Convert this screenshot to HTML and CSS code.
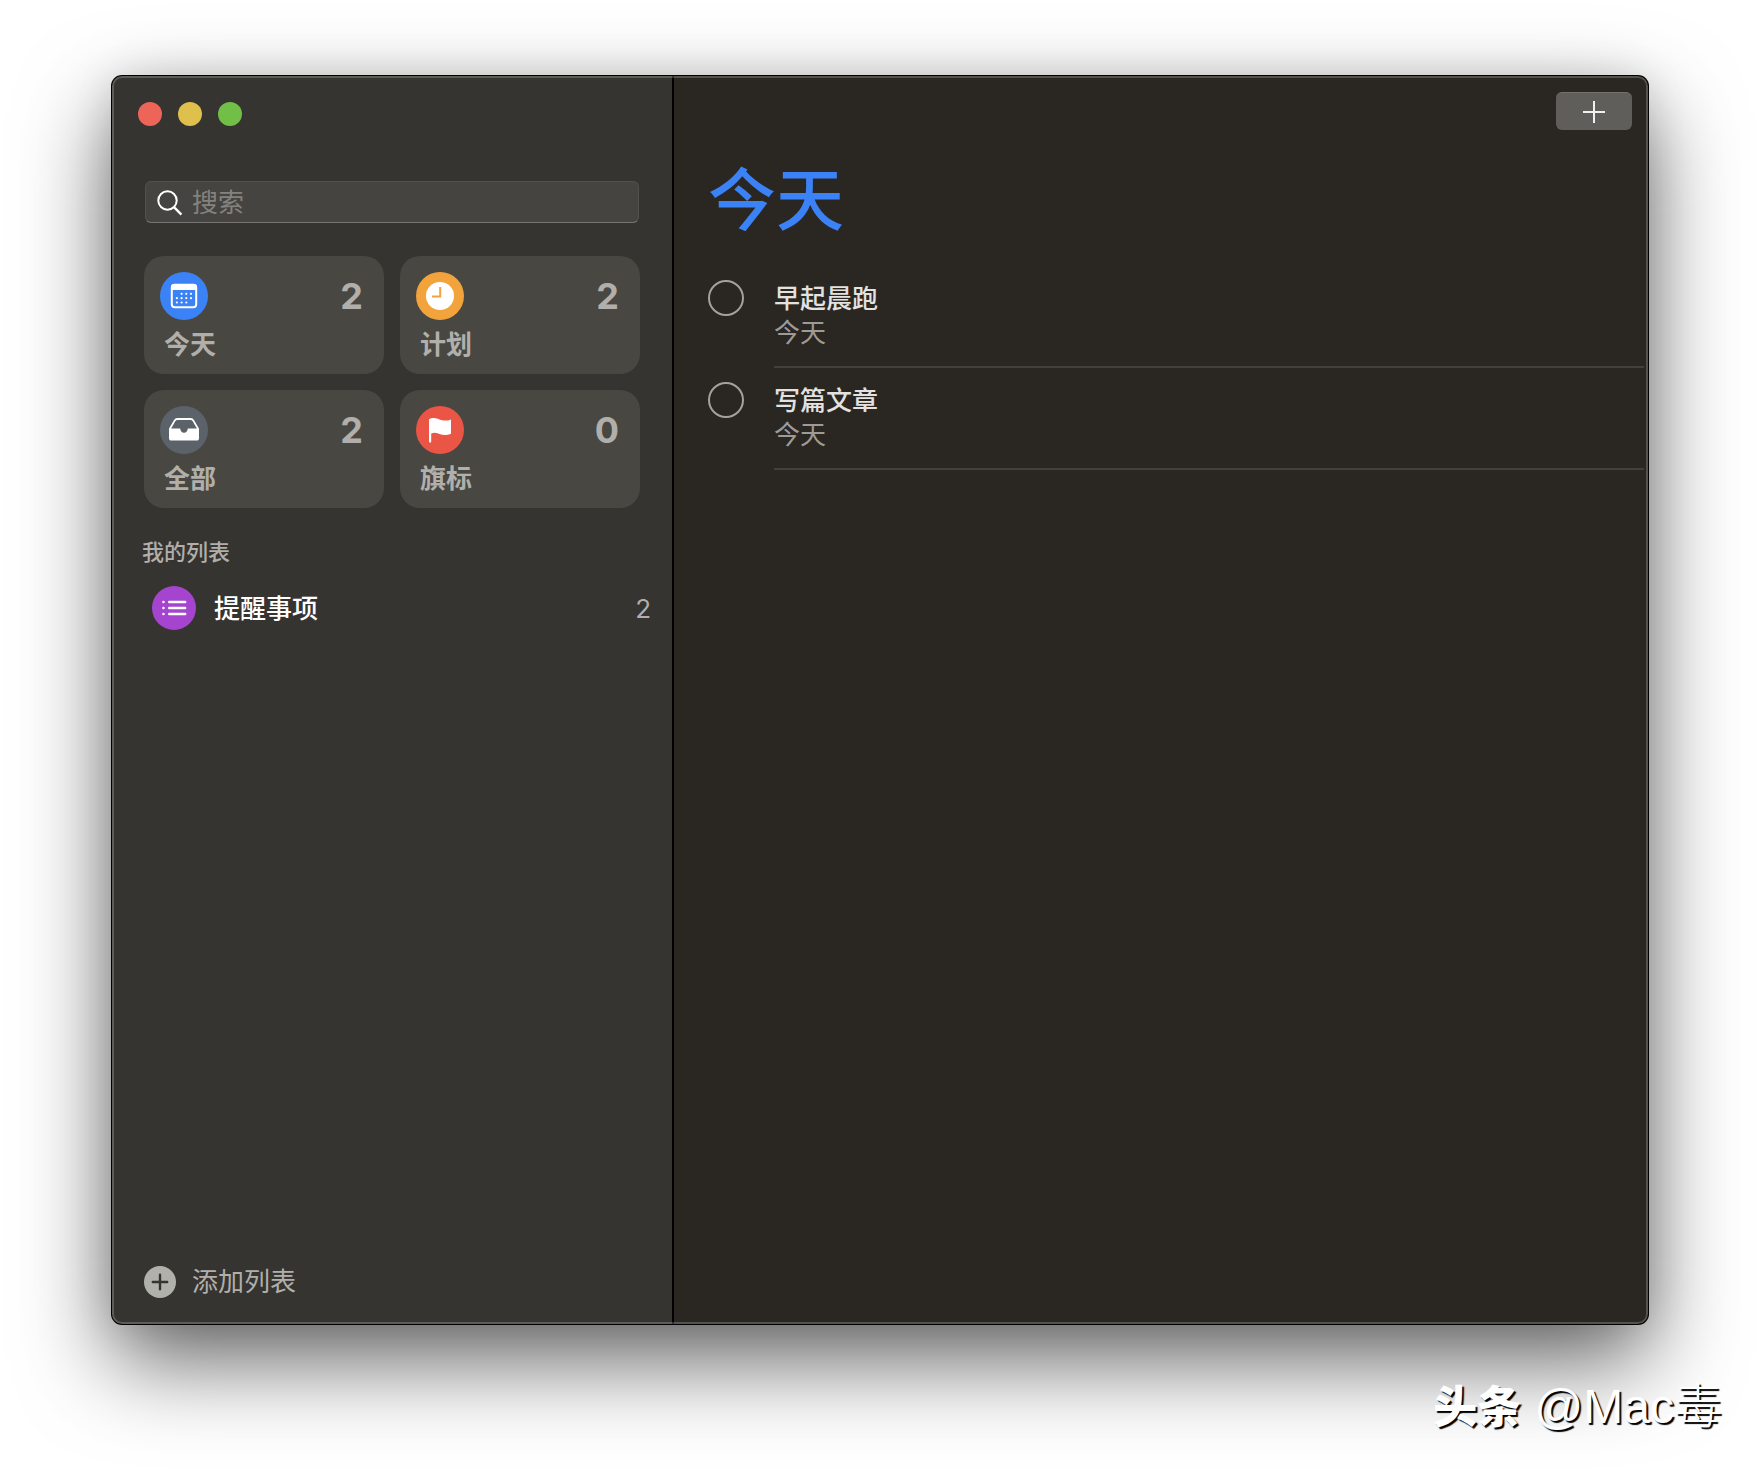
FILE: index.html
```html
<!DOCTYPE html>
<html lang="zh-CN">
<head>
    <meta charset="UTF-8">
    <meta name="viewport" content="width=device-width, initial-scale=1.0">
    <title>提醒事项</title>
    <link rel="stylesheet" href="styles.css">
</head>
<body>
    <div class="window">
        <aside class="sidebar">
            <div class="traffic">
                <button type="button" class="dot red" aria-label="关闭"></button>
                <button type="button" class="dot yellow" aria-label="最小化"></button>
                <button type="button" class="dot green" aria-label="缩放"></button>
            </div>

            <label class="search">
                <svg width="26" height="26" viewBox="0 0 26 26" fill="none" stroke="#fff" stroke-width="2">
                    <circle cx="10.5" cy="10.5" r="9.2"/>
                    <path d="M17 17.2l7.4 7.4" stroke-width="2.4"/>
                </svg>
                <input type="search" placeholder="搜索" aria-label="搜索">
            </label>

            <!-- Cartões -->
            <nav class="cards">
                <a href="#today" class="card">
                    <span class="icon blue">
                        <svg width="48" height="48" viewBox="0 0 48 48">
                            <rect x="11.8" y="12.8" width="24.4" height="22.4" rx="3" fill="none" stroke="#fff" stroke-width="2"/>
                            <path d="M11 18v-3a3 3 0 0 1 3-3h20a3 3 0 0 1 3 3v3z" fill="#fff"/>
                            <path d="M21.6 21.8h9.8M16.9 26.2h14.5M16.9 30.5h9.8" stroke="#fff" stroke-width="2.2" stroke-linecap="round" stroke-dasharray="0 4.7"/>
                        </svg>
                    </span>
                    <span class="count">2</span>
                    <span class="name">今天</span>
                </a>
                <a href="#scheduled" class="card">
                    <span class="icon orange">
                        <svg width="48" height="48" viewBox="0 0 48 48">
                            <circle cx="24" cy="24" r="14" fill="#fff"/>
                            <path d="M24.2 15v9.6H16" fill="none" stroke="#f2a33c" stroke-width="2"/>
                        </svg>
                    </span>
                    <span class="count">2</span>
                    <span class="name">计划</span>
                </a>
                <a href="#all" class="card">
                    <span class="icon gray">
                        <svg width="48" height="48" viewBox="0 0 48 48">
                            <path d="M9.8 23l5-8.6a3 3 0 0 1 2.4-1.4h13.6a3 3 0 0 1 2.4 1.4l5 8.6" fill="none" stroke="#fff" stroke-width="1.8"/>
                            <path d="M9 22.6h11.2c.2 2.6 1.6 4.2 3.8 4.2s3.6-1.6 3.8-4.2H39V32a2.6 2.6 0 0 1-2.6 2.6H11.6A2.6 2.6 0 0 1 9 32z" fill="#fff"/>
                        </svg>
                    </span>
                    <span class="count">2</span>
                    <span class="name">全部</span>
                </a>
                <a href="#flagged" class="card">
                    <span class="icon flag">
                        <svg width="48" height="48" viewBox="0 0 48 48">
                            <path d="M13 13.2c2.6-1.6 6-1.6 9.4-.2 4.4 1.8 8.2 2.2 12.6.4v14.4c-4.2 1.8-8.2 1.4-12.2-.1-3-1.1-5.2-1.2-7.6-.3v8.2a1.1 1.1 0 0 1-2.2 0z" fill="#fff"/>
                        </svg>
                    </span>
                    <span class="count">0</span>
                    <span class="name">旗标</span>
                </a>
            </nav>

            <h2>我的列表</h2>
            <a href="#reminders" class="list">
                <span class="list-icon">
                    <svg width="44" height="44" viewBox="0 0 44 44" stroke="#fff" stroke-width="2.4" stroke-linecap="round">
                        <path d="M17.2 16h16M17.2 22h16M17.2 28h16M11.4 16h.1M11.4 22h.1M11.4 28h.1"/>
                    </svg>
                </span>
                <span class="list-name">提醒事项</span>
                <span class="list-count">2</span>
            </a>

            <button type="button" class="add-list">
                <svg width="32" height="32" viewBox="0 0 32 32">
                    <circle cx="16" cy="16" r="16" fill="#b1b1ac"/>
                    <path d="M16 8.8v14.4M8.8 16h14.4" stroke="#36342f" stroke-width="2.4" stroke-linecap="round"/>
                </svg>
                添加列表
            </button>
        </aside>

        <main>
            <div class="toolbar">
                <button type="button" class="new" aria-label="新建提醒事项">
                    <svg width="22" height="22" viewBox="0 0 22 22" stroke="#f0f0ee" stroke-width="2">
                        <path d="M11 0v22M0 11h22"/>
                    </svg>
                </button>
            </div>
            <h1>今天</h1>
            <ul class="tasks">
                <li>
                    <input type="checkbox" id="task1">
                    <label for="task1">早起晨跑<span>今天</span></label>
                </li>
                <li>
                    <input type="checkbox" id="task2">
                    <label for="task2">写篇文章<span>今天</span></label>
                </li>
            </ul>
        </main>
    </div>

    <p class="watermark"><b>头条</b> @Mac毒</p>
</body>
</html>
```
FILE: styles.css
```css
* {
    margin: 0;
    padding: 0;
    box-sizing: border-box;
}

body {
    font-family: Inter, "Noto Sans CJK SC", sans-serif;
    font-size: 26px;
    line-height: 34px;
    background: #fff;
    color: #b0afab;
    min-height: 100vh;
    padding: 76px 112px 148px;
    display: flex;
    position: relative;
    overflow-x: hidden;
}

a {
    color: inherit;
    text-decoration: none;
}

button {
    border: none;
    font: inherit;
    color: inherit;
    cursor: pointer;
}

svg {
    display: block;
}

/* Janela */
.window {
    flex: 1;
    display: flex;
    position: relative;
    border-radius: 10px;
    overflow: hidden;
    background: #2a2622;
    box-shadow: 0 0 0 1px #000, 0 36px 90px rgba(0, 0, 0, 0.62), 0 0 40px rgba(0, 0, 0, 0.1);
}

/* Brilho na borda da janela */
.window::after {
    content: "";
    position: absolute;
    inset: 0;
    border: 2px solid rgba(255, 255, 255, 0.2);
    border-radius: 10px;
    pointer-events: none;
}

.sidebar {
    width: 562px;
    flex-shrink: 0;
    display: flex;
    flex-direction: column;
    padding: 26px 32px 25px;
    background: #363430;
    border-right: 2px solid #000;
}

.traffic {
    display: flex;
    gap: 16px;
    margin-left: -6px;
    margin-bottom: 55px;
}

.dot {
    width: 24px;
    height: 24px;
    border-radius: 50%;
}

.red {
    background: #ed6559;
}

.yellow {
    background: #e0c04c;
}

.green {
    background: #71bf47;
}

.search {
    display: flex;
    align-items: center;
    gap: 9px;
    height: 42px;
    padding: 2px 11px 0;
    margin: 0 1px 33px;
    background: #464440;
    border: 1px solid #53514d;
    border-bottom-color: #787672;
    border-radius: 6px;
}

.search input {
    flex: 1;
    min-width: 0;
    background: none;
    border: none;
    outline: none;
    font: inherit;
    color: #fff;
}

.search input::placeholder {
    color: #83827e;
}

/* Cartões */
.cards {
    display: grid;
    grid-template-columns: 1fr 1fr;
    gap: 16px;
    margin-bottom: 28px;
}

.card {
    display: grid;
    grid-template-columns: 1fr auto;
    align-items: center;
    row-gap: 8px;
    height: 118px;
    padding: 16px 21px 12px 16px;
    border-radius: 20px;
    background: #494742;
    font-weight: 700;
}

.icon {
    width: 48px;
    height: 48px;
    border-radius: 50%;
}

.blue {
    background: #3b82f7;
}

.orange {
    background: #f2a33c;
}

.gray {
    background: #5b626a;
}

.flag {
    background: #eb5545;
}

.count {
    font-size: 36px;
}

.name {
    padding-left: 4px;
}

h2 {
    font-size: 22px;
    line-height: 32px;
    font-weight: 500;
    margin-left: -2px;
    margin-bottom: 18px;
}

.list {
    display: flex;
    align-items: center;
    gap: 18px;
    margin-left: 8px;
    margin-right: -11px;
}

.list-icon {
    border-radius: 50%;
    background: #a544cf;
}

.list-name {
    flex: 1;
    color: #fff;
    font-weight: 500;
}

.list-name,
.list-count {
    padding-top: 2px;
}

.add-list {
    display: flex;
    align-items: center;
    gap: 16px;
    margin-top: auto;
    align-self: flex-start;
    background: none;
}

/* Área principal */
main {
    flex: 1;
    min-width: 0;
    padding: 16px 4px 16px 34px;
}

.toolbar {
    display: flex;
    justify-content: flex-end;
    padding-right: 12px;
}

.new {
    display: flex;
    align-items: center;
    justify-content: center;
    width: 76px;
    height: 38px;
    border-radius: 6px;
    background: #605e5a;
    border-top: 1px solid #73716d;
}

h1 {
    font-size: 68px;
    line-height: 80px;
    font-weight: 500;
    color: #3b82f7;
    margin: 30px 0 34px;
}

.tasks {
    list-style: none;
}

.tasks li {
    display: flex;
    gap: 30px;
    height: 102px;
}

.tasks input {
    appearance: none;
    flex-shrink: 0;
    width: 36px;
    height: 36px;
    margin-top: 6px;
    border: 2px solid #a5a29e;
    border-radius: 50%;
}

.tasks input:checked {
    background: #3b82f7;
}

.tasks label {
    flex: 1;
    padding-top: 8px;
    height: 94px;
    border-bottom: 2px solid #42403c;
    color: #e3e2e0;
    font-weight: 500;
}

.tasks label span {
    display: block;
    color: #9e9b97;
    font-weight: 400;
}

.watermark {
    position: absolute;
    right: 38px;
    bottom: 32px;
    font-family: "Liberation Sans", "Noto Sans CJK SC", sans-serif;
    font-size: 48px;
    line-height: 64px;
    font-weight: 300;
    color: #fff;
    text-shadow: 2px 2px 1px #000;
}

.watermark b {
    font-size: 44px;
    font-weight: 900;
}
```
